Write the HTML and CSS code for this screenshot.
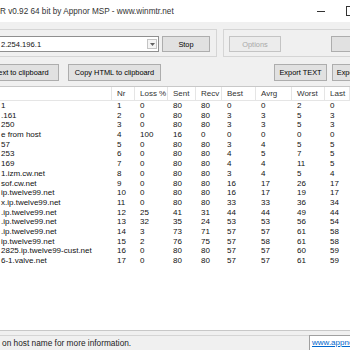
FILE: index.html
```html
<!DOCTYPE html>
<html lang="en">
<head>
  <meta charset="UTF-8" />
  <title>WinMTR</title>
  <link rel="stylesheet" href="styles.css">
</head>
<body>
  <div class="window">
    <div class="titlebar">
      <span class="title">R v0.92 64 bit by Appnor MSP - www.winmtr.net</span>
      <span class="min"></span>
      <span class="max"></span>
    </div>

    <!-- Host + start/stop, options -->
    <div class="toolbar">
      <div class="group host-group">
        <div class="combo">
          <span class="combo-text">2.254.196.1</span>
          <span class="combo-arrow">
            <svg width="5" height="3" viewBox="0 0 5 3"><path d="M0 0 L5 0 L2.5 3 Z" fill="#606060"/></svg>
          </span>
        </div>
        <button class="btn stop">Stop</button>
      </div>
      <div class="group opt-group">
        <button class="btn options" disabled>Options</button>
        <button class="btn exit">Exit</button>
      </div>
    </div>

    <div class="actions">
      <button class="btn copy-text">Copy Text to clipboard</button>
      <button class="btn copy-html">Copy HTML to clipboard</button>
      <button class="btn export-text">Export TEXT</button>
      <button class="btn export-html">Export HTML</button>
    </div>

    <!-- Trace list -->
    <div class="listview">
      <div class="lv-header">
        <span></span>
        <span>Nr</span>
        <span>Loss %</span>
        <span>Sent</span>
        <span>Recv</span>
        <span>Best</span>
        <span>Avrg</span>
        <span>Worst</span>
        <span>Last</span>
        <span></span>
      </div>
      <div id="rows"></div>
    </div>

    <div class="statusbar">
      <div class="status-text">Double click on host name for more information.</div>
      <div class="status-link"><a href="#">www.appnor.com</a></div>
    </div>
  </div>

  <script>
    const hops = [
      ["1", 1, 0, 80, 80, 0, 0, 2, 0],
      [".161", 2, 0, 80, 80, 3, 3, 5, 3],
      ["250", 3, 0, 80, 80, 3, 3, 5, 3],
      ["e from host", 4, 100, 16, 0, 0, 0, 0, 0],
      ["57", 5, 0, 80, 80, 3, 4, 5, 5],
      ["253", 6, 0, 80, 80, 4, 5, 7, 5],
      ["169", 7, 0, 80, 80, 4, 4, 11, 5],
      ["1.izm.cw.net", 8, 0, 80, 80, 3, 4, 5, 4],
      ["sof.cw.net", 9, 0, 80, 80, 16, 17, 26, 17],
      ["ip.twelve99.net", 10, 0, 80, 80, 16, 17, 19, 17],
      ["x.ip.twelve99.net", 11, 0, 80, 80, 33, 33, 36, 34],
      [".ip.twelve99.net", 12, 25, 41, 31, 44, 44, 49, 44],
      [".ip.twelve99.net", 13, 32, 35, 24, 53, 53, 56, 54],
      [".ip.twelve99.net", 14, 3, 73, 71, 57, 57, 61, 58],
      ["ip.twelve99.net", 15, 2, 76, 75, 57, 58, 61, 58],
      ["2825.ip.twelve99-cust.net", 16, 0, 80, 80, 57, 57, 60, 59],
      ["6-1.valve.net", 17, 0, 80, 80, 57, 57, 61, 59]
    ];

    document.getElementById("rows").innerHTML = hops.map(h => `
      <div class="lv-row">${h.map(v => `<span>${v}</span>`).join('')}<span></span></div>
    `).join('');
  </script>
</body>
</html>
```

FILE: styles.css
```css
body {
  margin: 0;
  font-family: "Liberation Sans", Arial, sans-serif;
  background-color: #f0f0f0;
  overflow: hidden;
}

.window {
  width: 350px;
  height: 350px;
  display: flex;
  flex-direction: column;
  overflow: hidden;
}

.titlebar {
  height: 22px;
  flex-shrink: 0;
  background: #fff;
  display: flex;
  align-items: center;
}

.title {
  flex: 1;
  font-size: 8.2px;
  color: #333;
  white-space: nowrap;
}

.min {
  width: 8px;
  height: 1px;
  background: #333;
  margin-right: 21px;
  flex-shrink: 0;
}

.max {
  width: 8px;
  height: 8px;
  border: 1px solid #333;
  margin-right: -6px;
  flex-shrink: 0;
}

.btn {
  font-family: "Liberation Sans", Arial, sans-serif;
  font-size: 7.4px;
  color: #000;
  background-color: #e1e1e1;
  border: 1px solid #adadad;
  padding: 0;
  height: 16px;
  flex-shrink: 0;
  white-space: nowrap;
}

.toolbar {
  display: flex;
  gap: 6px;
  margin-top: 7px;
  margin-left: -10px;
  flex-shrink: 0;
}

.group {
  display: flex;
  align-items: flex-start;
  border: 1px solid #d5d5d5;
  padding: 6px 6px 4px 4px;
  height: 16px;
  box-sizing: content-box;
  flex-shrink: 0;
}

.host-group {
  width: 215px;
  gap: 3px;
}

.opt-group {
  width: 160px;
  padding-left: 5px;
  gap: 50px;
}

.combo {
  width: 164px;
  height: 16px;
  box-sizing: border-box;
  background: #fff;
  border: 1px solid #8f8f8f;
  display: flex;
  align-items: center;
  justify-content: space-between;
  padding: 0 1px 0 5px;
}

.combo-text {
  font-size: 7.6px;
  color: #111;
}

.combo-arrow {
  width: 10px;
  height: 10px;
  box-sizing: border-box;
  border: 1px solid #c4c4c4;
  background: #f4f4f4;
  display: flex;
  align-items: center;
  justify-content: center;
}

.stop {
  width: 48px;
}

.options {
  width: 52px;
  background-color: #ececec;
  border-color: #c4c4c4;
  color: #a8a8a8;
}

.exit {
  width: 70px;
}

.actions {
  display: flex;
  gap: 9px;
  margin-top: 7px;
  margin-left: -35px;
  flex-shrink: 0;
}

.actions .btn {
  height: 17px;
}

.copy-text {
  width: 94px;
}

.copy-html {
  width: 93px;
}

.export-text {
  width: 53px;
  margin-left: 104px;
}

.export-html {
  width: 53px;
  margin-left: -4px;
}

.listview {
  margin-top: 5px;
  margin-left: -10px;
  width: 380px;
  height: 245px;
  flex-shrink: 0;
  box-sizing: border-box;
  background: #fff;
  border: 1px solid #c8c8c8;
  font-size: 8px;
}

.lv-header,
.lv-row {
  display: grid;
  grid-template-columns: 121px 23px 33px 28px 26px 34px 36px 33px 25px 1fr;
}

.lv-header {
  height: 13px;
  line-height: 13px;
  border-bottom: 1px solid #e5e5e5;
  color: #333;
}

.lv-header span {
  border-right: 1px solid #e5e5e5;
  padding-left: 5px;
  white-space: nowrap;
  overflow: hidden;
}

.lv-row {
  height: 9.7px;
  line-height: 9.7px;
  color: #111;
}

.lv-row span {
  padding-left: 5px;
  white-space: nowrap;
  overflow: hidden;
}

.lv-row span:first-child {
  padding-left: 10px;
}

.statusbar {
  margin-top: auto;
  height: 15px;
  display: flex;
  flex-shrink: 0;
}

.status-text {
  flex: 1;
  margin-left: -45px;
  border-top: 1px solid #d5d5d5;
  font-size: 8.3px;
  line-height: 14px;
  color: #222;
  white-space: nowrap;
}

.status-link {
  width: 38px;
  border-top: 1px solid #a0a0a0;
  border-left: 1px solid #a0a0a0;
  background: #fff;
  font-size: 8px;
  line-height: 13px;
  padding-left: 2px;
  white-space: nowrap;
  overflow: hidden;
}

.status-link a {
  color: #0066cc;
}
```
